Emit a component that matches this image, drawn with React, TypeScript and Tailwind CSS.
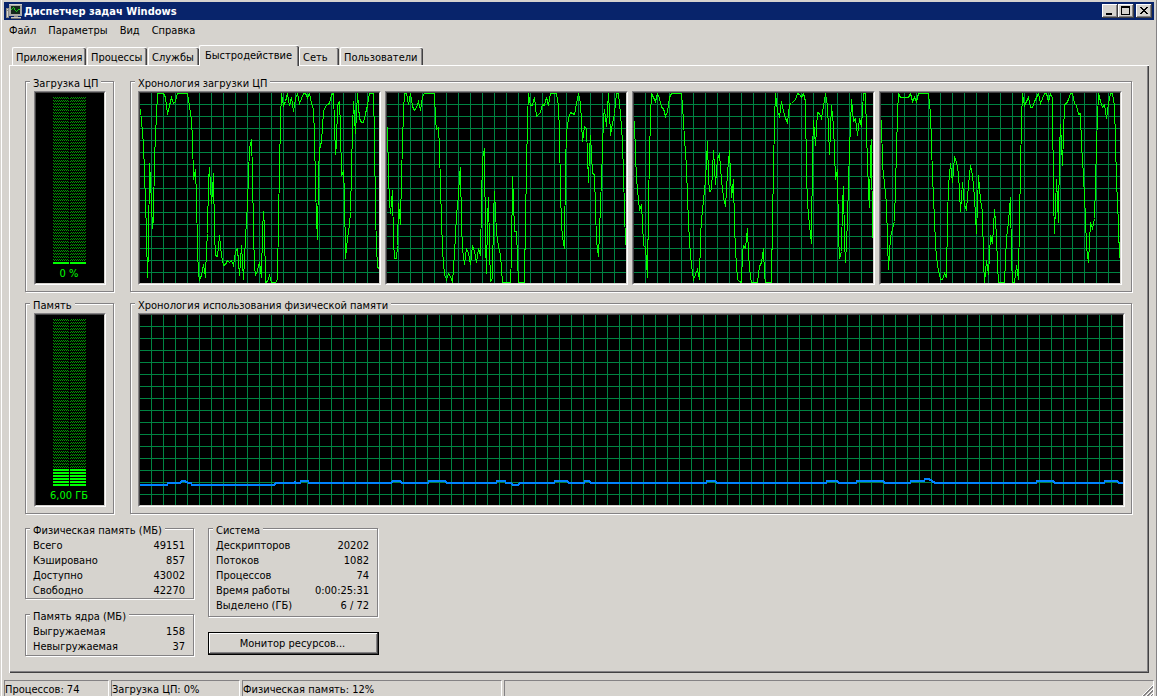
import { ReactNode, useId, useState } from "react";

const TABS = [
  { name: "Приложения", width: "w-[74px] mr-px" },
  { name: "Процессы", width: "w-[60px] mr-px" },
  { name: "Службы", width: "w-[51px]" },
  { name: "Быстродействие", width: "w-[100px]" },
  { name: "Сеть", width: "w-[40px] mr-px" },
  { name: "Пользователи", width: "w-[83px]" },
];

const MENU = ["Файл", "Параметры", "Вид", "Справка"];

const CPU_TRACES = [
  "0,16 3,51 5,109 6,140 7,184 8,155 9,70 10,87 12,135 13,125 14,64 17,0 23,0 25,4 27,21 29,12 31,4 33,10 35,8 37,0 47,0 49,13 51,27 52,45 53,86 55,76 56,104 57,155 58,181 59,186 61,182 63,171 65,184 66,155 67,140 68,87 69,74 71,110 72,97 73,80 74,140 75,162 77,163 79,142 81,162 83,172 85,171 87,167 89,169 91,167 93,172 95,158 97,155 99,182 101,152 103,186 105,145 107,110 108,82 109,55 111,46 112,79 113,139 114,173 115,182 117,177 119,169 121,184 122,137 123,118 124,135 125,189 127,188 129,182 131,189 135,189 137,186 138,125 139,77 140,26 141,0 143,12 145,8 147,0 149,12 151,4 153,18 155,5 157,0 159,10 161,5 163,0 165,0 167,4 169,0 171,10 173,16 174,42 175,92 176,125 177,146 178,80 179,56 181,48 183,18 185,13 187,11 189,10 191,1 193,0 194,32 195,61 196,51 197,12 199,8 200,35 201,82 203,78 204,100 205,165 207,145 209,131 210,118 211,78 212,35 213,8 215,40 216,20 217,0 219,25 221,29 223,29 225,20 227,12 229,0 233,0 234,44 235,118 236,155 237,172 238,176",
  "0,34 1,82 2,108 3,120 5,97 6,148 7,165 9,165 10,152 11,110 13,131 14,82 15,51 16,17 17,0 19,0 21,11 23,0 25,13 27,17 29,14 31,8 33,17 35,3 37,0 47,0 48,27 49,36 51,34 52,54 53,95 54,125 55,157 57,181 59,186 61,180 63,183 65,189 67,160 69,122 71,101 72,82 73,74 74,132 75,155 77,171 79,155 81,160 83,171 85,152 87,158 89,169 91,155 93,162 94,110 95,65 97,55 98,149 99,180 100,125 101,104 102,153 103,188 105,185 106,122 107,98 109,139 111,153 113,162 115,189 123,189 124,162 125,83 126,107 127,138 129,138 130,165 131,189 137,189 138,125 139,78 140,25 141,0 143,12 145,12 147,4 149,23 151,21 153,19 155,11 157,12 159,4 161,12 163,0 169,0 171,12 172,41 173,98 174,130 175,144 177,155 178,72 179,39 181,25 183,19 187,21 189,10 191,0 193,10 195,48 197,33 199,35 200,62 201,89 202,58 203,42 205,80 207,81 208,115 209,148 211,163 212,138 213,112 214,85 215,57 216,23 217,16 219,33 221,0 222,18 223,42 225,30 227,20 229,0 231,0 233,20 235,48 236,82 237,115 238,152",
  "0,28 1,62 2,84 3,97 5,116 7,112 8,128 9,152 11,154 13,184 14,110 15,64 16,22 17,0 19,4 21,8 23,0 25,5 27,14 29,15 31,23 33,18 35,4 37,0 47,0 48,12 50,45 52,74 53,105 54,127 55,149 57,172 59,186 61,181 63,176 65,186 66,144 67,126 69,107 71,87 73,48 74,84 75,98 77,97 79,57 81,91 83,65 85,61 87,87 89,104 91,113 93,79 95,57 97,104 99,86 100,132 101,157 103,186 105,188 107,189 108,160 109,152 111,155 113,135 114,162 116,184 117,189 123,189 125,173 127,169 129,155 130,182 131,189 137,189 138,125 139,78 140,26 141,0 143,18 145,23 147,8 149,18 151,25 153,29 155,11 157,10 159,8 161,6 163,0 165,1 167,4 169,0 171,8 172,80 173,110 175,132 177,150 178,58 179,27 181,52 183,19 185,20 187,25 189,13 191,0 193,12 195,61 197,12 199,32 201,86 203,76 204,142 205,165 207,158 208,110 209,93 210,148 211,169 213,128 214,88 215,57 217,6 219,28 221,25 223,42 225,25 227,33 229,0 231,0 232,40 234,98 235,114 236,58 237,46 238,145",
  "0,27 1,72 3,90 5,110 6,148 7,176 9,144 11,135 13,128 14,92 15,58 16,20 17,0 19,4 27,4 29,0 31,8 33,4 35,8 37,0 47,0 49,20 51,82 52,105 53,125 54,152 56,172 59,186 61,186 63,180 65,184 66,125 67,92 69,70 71,89 73,63 75,69 77,80 79,118 81,89 83,112 85,116 87,92 89,72 91,82 93,104 95,140 97,82 99,107 101,118 102,168 103,189 105,167 107,181 109,142 111,150 113,116 115,142 116,172 117,189 123,189 125,145 127,128 129,104 130,165 131,189 133,189 135,172 137,186 138,125 139,78 140,26 141,0 143,12 145,8 147,4 149,14 151,14 153,8 155,4 157,0 159,10 161,5 163,0 165,0 167,8 169,0 171,5 172,105 173,140 175,86 177,129 178,57 179,31 181,72 183,11 185,10 187,6 189,0 191,0 193,10 195,12 197,21 199,20 200,52 202,82 204,125 205,154 207,169 209,129 211,135 213,125 214,92 215,50 216,25 217,0 219,8 221,14 223,11 225,25 227,10 229,0 231,0 233,12 234,48 235,88 236,108 237,132 238,165",
];

const MEMORY_TRACE =
  "0,170 27,170 28,168 40,168 42,166 45,166 48,168 51,168 52,170 134,170 136,168 154,168 155,167 156,168 160,168 161,166 168,166 169,168 251,168 253,166 260,166 262,168 288,168 289,166 305,166 307,168 356,168 357,166 365,166 366,168 371,168 373,170 378,170 380,168 414,168 415,166 427,166 429,168 444,168 445,166 449,166 451,168 566,168 567,166 575,166 577,168 686,168 687,166 697,166 699,168 716,168 717,166 743,166 745,168 770,168 771,166 784,166 785,164 789,164 792,166 795,168 896,168 897,166 913,166 915,168 964,168 965,166 977,166 979,168 983,168";

interface GroupProps {
  title: string;
  className?: string;
  children: ReactNode;
}

const Group: React.FC<GroupProps> = ({ title, className = "", children }) => (
  <fieldset
    className={`min-w-0 border border-[#848284] pt-px pl-[7px] shadow-[1px_1px_#fff,inset_1px_1px_#fff] ${className}`}
  >
    <legend className="-ml-[3px] bg-[#d6d3ce] px-[3px] pt-[5px] leading-[12px] whitespace-nowrap">
      {title}
    </legend>
    {children}
  </fieldset>
);

// Sunken black box that every chart and meter sits in
const Well = ({ className = "", children }: { className?: string; children: ReactNode }) => (
  <div
    className={`h-[194px] border border-t-[#848284] border-l-[#848284] border-r-white border-b-white ${className}`}
  >
    <div className="h-full border border-t-[#424142] border-l-[#424142] border-r-[#d6d3ce] border-b-[#d6d3ce] bg-black">
      {children}
    </div>
  </div>
);

interface ChartProps {
  points: string;
  width: number;
  memory?: boolean;
}

const Chart: React.FC<ChartProps> = ({ points, width, memory }) => {
  const grid = useId();

  return (
    <Well>
      <svg className="block h-full w-full" shapeRendering="crispEdges">
        <defs>
          <pattern id={grid} width="12" height="12" patternUnits="userSpaceOnUse">
            <path d="M11 0h1v12H0v-1h11z" fill="#008442" />
          </pattern>
        </defs>
        <rect width="100%" height="100%" fill={`url(#${grid})`} />
        <svg width="100%" height="100%" viewBox={`0 0 ${width} 190`} preserveAspectRatio="none">
          <polyline
            points={points}
            fill="none"
            stroke={memory ? "#0082ff" : "#00ff00"}
            strokeWidth={memory ? 2 : 1}
            transform={memory ? undefined : "translate(0.5 0.5)"}
            vectorEffect="non-scaling-stroke"
          />
        </svg>
      </svg>
    </Well>
  );
};

const ROWS = 56;

const Meter = ({ id, lit, label }: { id: string; lit: number; label: string }) => (
  <Well className="ml-px w-[72px]">
    <svg className="block" width="68" height="174" shapeRendering="crispEdges">
      <defs>
        <pattern id={id} x="17" y="4" width="2" height="3" patternUnits="userSpaceOnUse">
          <rect width="1" height="1" fill="#009a00" />
          <rect x="1" y="1" width="1" height="1" fill="#009a00" />
        </pattern>
      </defs>
      <rect x="17" y="4" width="33" height={(ROWS - lit) * 3} fill={`url(#${id})`} />
      {Array.from({ length: lit }, (_, i) => (
        <rect key={i} x="17" y={4 + (ROWS - 1 - i) * 3} width="33" height="2" fill="#00ff00" />
      ))}
      <rect x="33" y="4" width="1" height="168" fill="#000" />
    </svg>
    <div className="pr-[2px] text-center leading-[14px] text-[#00ff00]">{label}</div>
  </Well>
);

const Stats = ({ rows }: { rows: string[][] }) => (
  <table className="w-full">
    <tbody>
      {rows.map(([name, value]) => (
        <tr key={name} className="h-[15px] leading-[15px]">
          <th scope="row" className="p-0 text-left font-normal whitespace-nowrap">
            {name}
          </th>
          <td className="p-0 text-right whitespace-nowrap">{value}</td>
        </tr>
      ))}
    </tbody>
  </table>
);

const WindowButton = ({ label, className = "", d }: { label: string; className?: string; d: string }) => (
  <button
    aria-label={label}
    className={`h-[14px] w-4 bg-[#d6d3ce] shadow-[inset_-1px_-1px_#424142,inset_1px_1px_#fff,inset_-2px_-2px_#848284] ${className}`}
  >
    <svg className="block" width="16" height="14" shapeRendering="crispEdges">
      <path d={d} fill="#000" fillRule="evenodd" />
    </svg>
  </button>
);

const AppIcon = () => (
  <svg width="16" height="16" shapeRendering="crispEdges">
    <path d="M0 5h3v10H0z" fill="#8c8c88" />
    <path d="M1 6h1v1H1zM1 8h1v6H1z" fill="#d8d8d4" />
    <path d="M3 1h13v12H3z" fill="#a8a8a4" />
    <path d="M3 1h13v1H3z" fill="#d0d0cc" />
    <path d="M5 3h9v8H5z" fill="#14281c" />
    <path d="M5 6h1v1H5zM6 5h1v1H6zM7 4h1v1H7zM8 5h1v2H8zM9 7h1v1H9zM10 8h1v1h-1zM11 7h1v1h-1zM12 6h2v1h-2z" fill="#18c818" />
    <path d="M8 13h4v1H8z" fill="#8c8c88" />
    <path d="M5 14h10v1H5z" fill="#c8c8c4" />
    <path d="M5 15h10v1H5z" fill="#70706c" />
  </svg>
);

const App = () => {
  const [tab, setTab] = useState("Быстродействие");

  return (
    <div className="flex min-h-screen bg-[#d6d3ce] pl-px font-['DejaVu_Sans_Condensed','DejaVu_Sans',sans-serif] text-[11px] text-black">
      <div className="flex min-w-0 flex-1 flex-col border-r border-l border-r-[#848284] border-l-white px-[2px] pt-[2px]">
        <header className="flex h-[18px] items-center bg-[#08246b] px-[2px] text-white">
          <AppIcon />
          <h1 className="ml-[2px] flex-1 pt-px leading-[18px] font-bold whitespace-nowrap">Диспетчер задач Windows</h1>
          <WindowButton label="Свернуть" d="M4 9h6v2H4z" />
          <WindowButton label="Развернуть" d="M3 2h9v9H3zM4 4v6h7V4z" />
          <WindowButton
            label="Закрыть"
            className="ml-[2px]"
            d="M4 3h2v1h1v1h2V4h1V3h2v1h-1v1h-1v1H9v1h1v1h1v1h1v1h-2V9H9V8H7v1H6v1H4V9h1V8h1V7h1V6H6V5H5V4H4z"
          />
        </header>

        <nav className="flex h-5 gap-3 pl-[5px]">
          {MENU.map((item) => (
            <button key={item} className="pt-[2px]">
              {item}
            </button>
          ))}
        </nav>

        <div role="tablist" className="mx-[5px] mt-[5px] flex h-5 items-end pl-[3px]">
          {TABS.map(({ name, width }) => (
            <button
              key={name}
              role="tab"
              aria-selected={tab === name}
              onClick={() => setTab(name)}
              className={`rounded-t-[2px] border-t border-l border-white text-left whitespace-nowrap shadow-[inset_-1px_0_#424142,inset_-2px_0_#848284] ${width} ${
                tab === name
                  ? "relative -mb-px h-[21px] bg-[#d6d3ce] pt-px pl-[5px]"
                  : "h-[18px] pt-[2px] pl-[3px]"
              }`}
            >
              {name}
            </button>
          ))}
        </div>

        <main className="mx-[5px] flex-1 border-t border-l border-white pb-[14px] shadow-[inset_-1px_-1px_#424142,inset_-2px_-2px_#848284]">
          <div className="flex flex-col pt-[7px] pr-[17px] pl-[15px]">
            <div className="flex gap-4">
              <Group title="Загрузка ЦП" className="w-[89px] shrink-0 pb-[6px]">
                <Meter id="cpu-meter" lit={1} label="0 %" />
              </Group>
              <Group title="Хронология загрузки ЦП" className="flex-1 pr-[9px] pb-[6px]">
                <div className="grid grid-cols-4 gap-1">
                  {CPU_TRACES.map((points, i) => (
                    <Chart key={i} points={points} width={239} />
                  ))}
                </div>
              </Group>
            </div>

            <div className="mt-[3px] flex gap-4">
              <Group title="Память" className="w-[89px] shrink-0 pb-[6px]">
                <Meter id="memory-meter" lit={6} label="6,00 ГБ" />
              </Group>
              <Group title="Хронология использования физической памяти" className="flex-1 pr-[6px] pb-[6px]">
                <Chart points={MEMORY_TRACE} width={983} memory />
              </Group>
            </div>

            <div className="mt-[6px] flex items-start gap-[14px]">
              <div className="flex w-[169px] flex-col gap-[7px]">
                <Group title="Физическая память (МБ)" className="pr-2">
                  <Stats
                    rows={[
                      ["Всего", "49151"],
                      ["Кэшировано", "857"],
                      ["Доступно", "43002"],
                      ["Свободно", "42270"],
                    ]}
                  />
                </Group>
                <Group title="Память ядра (МБ)" className="pr-2 pb-px">
                  <Stats
                    rows={[
                      ["Выгружаемая", "158"],
                      ["Невыгружаемая", "37"],
                    ]}
                  />
                </Group>
              </div>
              <div className="flex w-[171px] flex-col gap-[15px]">
                <Group title="Система" className="mr-px pr-2 pb-[3px]">
                  <Stats
                    rows={[
                      ["Дескрипторов", "20202"],
                      ["Потоков", "1082"],
                      ["Процессов", "74"],
                      ["Время работы", "0:00:25:31"],
                      ["Выделено (ГБ)", "6 / 72"],
                    ]}
                  />
                </Group>
                <button className="h-[23px] border border-black pt-px pr-[2px] shadow-[inset_-1px_-1px_#424142,inset_1px_1px_#fff,inset_-2px_-2px_#848284]">
                  Монитор ресурсов...
                </button>
              </div>
            </div>
          </div>
        </main>

        <footer className="mt-[7px] flex h-4 gap-[2px] overflow-hidden leading-[17px] whitespace-nowrap">
          <div className="w-[105px] border-t border-r border-l border-[#848284] border-r-white">Процессов: 74</div>
          <div className="w-[129px] border-t border-r border-l border-[#848284] border-r-white">Загрузка ЦП: 0%</div>
          <div className="w-[260px] border-t border-r border-l border-[#848284] border-r-white">
            Физическая память: 12%
          </div>
          <div className="flex flex-1 items-end justify-end border-t border-r border-l border-[#848284] border-r-white">
            <svg width="11" height="11">
              <path d="M0 11L11 0M4 11L11 4M8 11L11 8" stroke="#fff" />
              <path d="M1 11L11 1M2 11L11 2M5 11L11 5M6 11L11 6M9 11L11 9" stroke="#848284" />
            </svg>
          </div>
        </footer>
      </div>
    </div>
  );
};

export default App;
